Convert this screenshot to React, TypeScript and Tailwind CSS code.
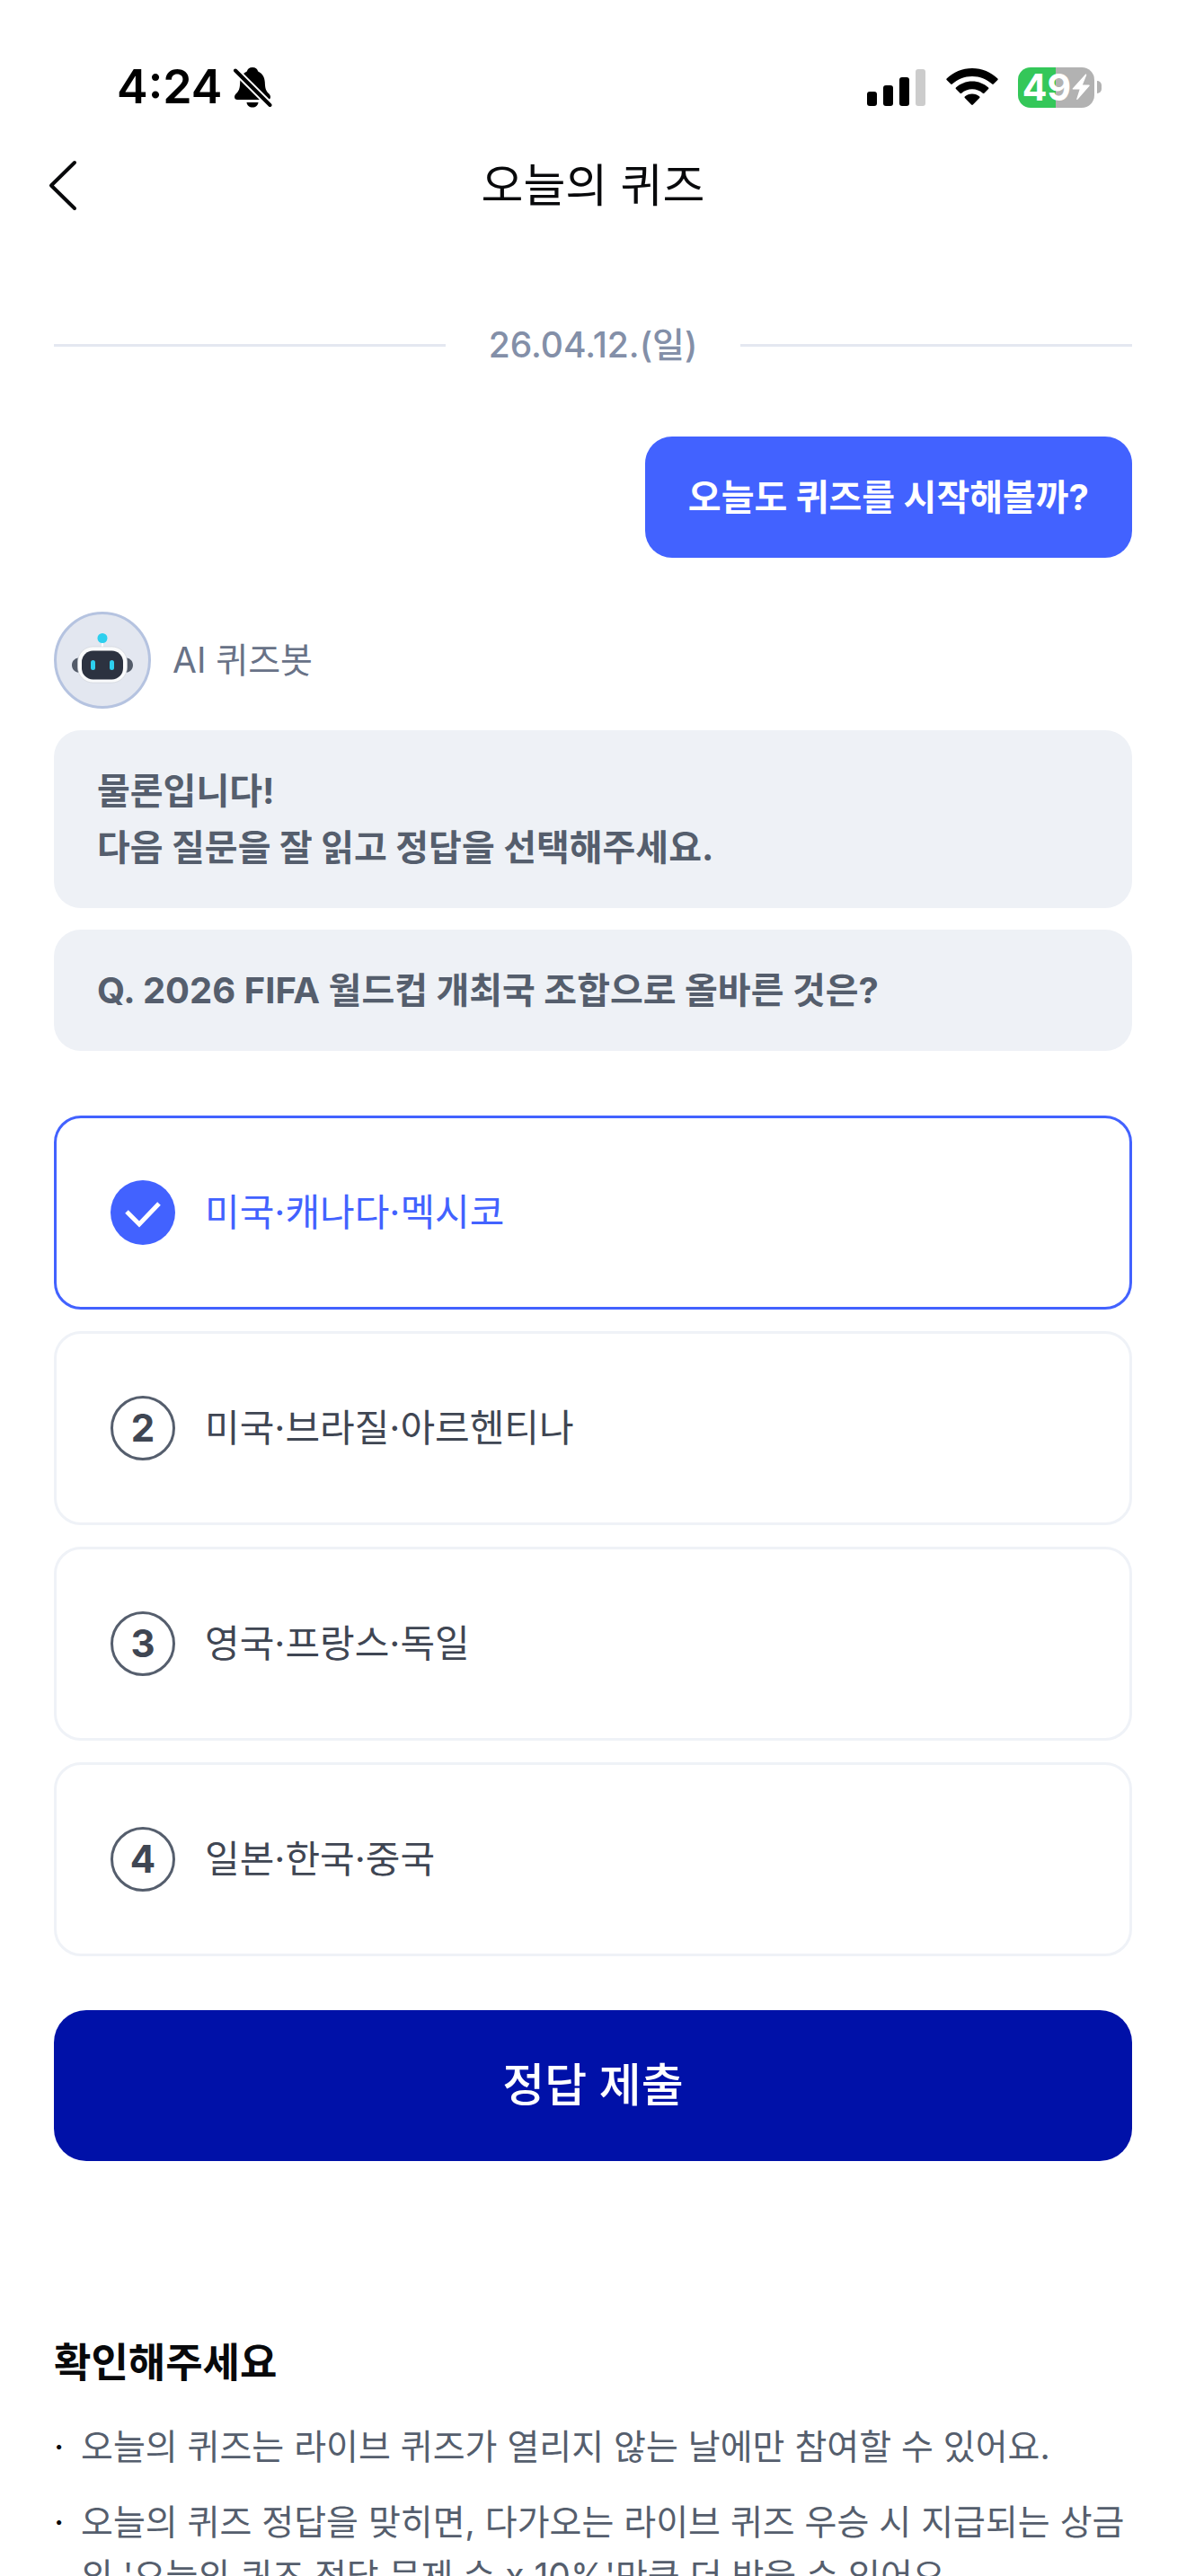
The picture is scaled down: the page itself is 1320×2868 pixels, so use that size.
import { useState } from "react";

const OPTIONS = ["미국·캐나다·멕시코", "미국·브라질·아르헨티나", "영국·프랑스·독일", "일본·한국·중국"];

const NOTES = [
  "오늘의 퀴즈는 라이브 퀴즈가 열리지 않는 날에만 참여할 수 있어요.",
  "오늘의 퀴즈 정답을 맞히면, 다가오는 라이브 퀴즈 우승 시 지급되는 상금의 '오늘의 퀴즈 정답 문제 수 x 10%'만큼 더 받을 수 있어요.",
];

function BellOffIcon() {
  return (
    <svg viewBox="0 0 44 48" className="h-12 w-11" aria-label="무음" role="img">
      <path
        d="M22 2c-3.4 0-5.6 2-6.2 4.600C11 8.800 8.500 13 8.200 18.500c-.3 7-1 9.500-4.200 12.500-1.400 1.400-2 2.400-2 4 0 1.900 1.300 3 3.200 3h33.600c1.900 0 3.200-1.100 3.200-3 0-1.600-.6-2.600-2-4-3.200-3-3.900-5.500-4.200-12.500C35.500 13 33 8.800 28.200 6.600 27.600 4 25.400 2 22 2z"
        fill="#000"
      />
      <path d="M15.500 41h13c-.4 3.400-3 5.600-6.500 5.600s-6.100-2.200-6.500-5.600z" fill="#000" />
      <path d="M1 3.500 43 45.500" stroke="#fff" strokeWidth="8" />
      <path d="M3 5.500 41.500 44" stroke="#000" strokeWidth="4" strokeLinecap="round" />
    </svg>
  );
}

function SignalIcon() {
  return (
    <svg viewBox="0 0 66 42" className="h-[42px] w-[66px]" aria-label="신호" role="img">
      <rect x="0" y="26" width="11" height="16" rx="3" fill="#000" />
      <rect x="18" y="19" width="11" height="23" rx="3" fill="#000" />
      <rect x="36" y="10" width="11" height="32" rx="3" fill="#000" />
      <rect x="54" y="1" width="11" height="41" rx="3" fill="#ccc" />
    </svg>
  );
}

function WifiIcon() {
  return (
    <svg viewBox="0 0 58 42" className="h-[42px] w-[58px]" aria-label="와이파이" role="img">
      <path d="M29 0C18 0 8 4.500.6 11.400c-.5.5-.5 1 0 1.500l4.600 4.700c.5.500 1.100.5 1.600 0C12.700 12.200 20.500 9 29 9s16.300 3.200 22.200 8.600c.5.500 1.100.5 1.600 0l4.600-4.700c.5-.5.5-1 0-1.500C50 4.500 40 0 29 0z" />
      <path d="M29 14.500c-7 0-13.300 2.700-18.100 7-.5.500-.5 1 0 1.500l4.700 4.700c.5.500 1 .5 1.600.1 3.200-2.800 7.300-4.500 11.800-4.500s8.600 1.700 11.800 4.500c.6.400 1.100.4 1.600-.1l4.700-4.700c.5-.5.500-1 0-1.500-4.800-4.300-11.100-7-18.100-7z" />
      <path d="M29 28.500c-3.200 0-6 1.200-8.200 3.100-.5.500-.5 1 0 1.500l7.300 7.500c.6.600 1.200.6 1.800 0l7.300-7.500c.5-.5.5-1 0-1.500-2.200-1.900-5-3.100-8.200-3.100z" />
    </svg>
  );
}

function Battery() {
  return (
    <div className="flex items-center gap-[3px]">
      <div className="flex h-[45px] w-[85px] items-center justify-center gap-px rounded-[14px] bg-[linear-gradient(90deg,#34c759_50%,#b2b2b2_50%)] text-white">
        <span className="text-[41px] leading-none font-bold">49</span>
        <svg viewBox="0 0 20 30" className="h-[30px] w-5 shrink-0" aria-hidden="true">
          <path
            d="M14.800 1 1 16.200c-.6.700-.3 1.300.6 1.300h7L5.300 28c-.3 1 .5 1.400 1.300.6l12.900-14.800c.6-.7.300-1.300-.6-1.300h-7L16.200 1.700c.3-1-.7-1.500-1.400-.7z"
            fill="#fff"
          />
        </svg>
      </div>
      <div className="h-[14px] w-[5px] rounded-r-full bg-[#b2b2b2]" />
    </div>
  );
}

function BotAvatar() {
  return (
    <svg viewBox="0 0 108 108" className="size-[108px]" aria-hidden="true">
      <circle cx="54" cy="54" r="52.500" fill="#e3e7f0" stroke="#b5c3e0" strokeWidth="3" />
      <path d="M54 34v6" stroke="#fff" strokeWidth="2" />
      <circle cx="54" cy="29.500" r="5.500" fill="#2dcfee" />
      <path d="M30 51c-6 0-10 3.500-10 8.500S24 68 30 68zM78 51c6 0 10 3.500 10 8.500S84 68 78 68z" fill="#535b69" />
      <rect x="26.500" y="39" width="55" height="40" rx="17" fill="#fafbfc" stroke="#cdd0d6" strokeWidth=".6" />
      <rect x="31" y="43.500" width="46" height="32" rx="12.500" fill="#2c3240" />
      <rect x="41" y="54" width="5" height="11" rx="2.500" fill="#2dcfee" />
      <rect x="62" y="54" width="5" height="11" rx="2.500" fill="#2dcfee" />
    </svg>
  );
}

export default function App() {
  const [picked, setPicked] = useState(0);

  return (
    <div className="flex h-screen flex-col overflow-hidden bg-white font-['Inter','Noto_Sans_CJK_KR',sans-serif] text-[39px] leading-[60px] text-[#555e6d]">
      <div className="flex items-center justify-between pt-[71px] pr-[94px] pl-[130px] text-black">
        <div className="flex items-center gap-3">
          <span className="text-[52px] leading-[52px] font-semibold">4:24</span>
          <BellOffIcon />
        </div>
        <div className="flex items-center gap-[22px]">
          <SignalIcon />
          <WifiIcon />
          <Battery />
        </div>
      </div>

      <header className="grid grid-cols-[1fr_auto_1fr] items-center px-12 pt-12 text-[#08090b]">
        <button type="button" aria-label="뒤로" className="w-11">
          <svg
            viewBox="0 0 44 72"
            className="h-[72px] w-11"
            fill="none"
            stroke="currentColor"
            strokeWidth="4"
            strokeLinecap="round"
            strokeLinejoin="round"
          >
            <path d="M35 10 9 35.500 35 61" />
          </svg>
        </button>
        <h1 className="text-[51px] leading-[72px] font-normal">오늘의 퀴즈</h1>
      </header>

      <main className="flex-1 overflow-y-auto px-15 pt-[111px] [scrollbar-width:none]">
        <div className="flex items-center gap-12 text-[#838fa8]">
          <div className="h-[3px] flex-1 bg-[#e4e8f1]" />
          <time dateTime="2026-04-12" className="font-medium">
            26.04.12.(일)
          </time>
          <div className="h-[3px] flex-1 bg-[#e4e8f1]" />
        </div>

        <p className="mt-[72px] ml-auto w-fit rounded-[30px] bg-[#4262ff] px-12 py-9 text-[40px] leading-[63px] font-bold text-white">
          오늘도 퀴즈를 시작해볼까?
        </p>

        <section className="mt-15 flex flex-col gap-6">
          <div className="flex items-center gap-6 text-[#687287]">
            <BotAvatar />
            <span>AI 퀴즈봇</span>
          </div>
          <p className="rounded-[30px] bg-[#eef1f6] px-12 py-9 text-[40px] leading-[63px] font-bold">
            물론입니다!
            <br />
            다음 질문을 잘 읽고 정답을 선택해주세요.
          </p>
          <p className="rounded-[30px] bg-[#eef1f6] px-12 py-9 text-[40px] leading-[63px] font-bold">
            Q. 2026 FIFA 월드컵 개최국 조합으로 올바른 것은?
          </p>
        </section>

        <form onSubmit={(e) => e.preventDefault()}>
          <fieldset aria-label="정답 선택" className="mt-[72px] flex flex-col gap-6">
            {OPTIONS.map((label, i) => {
              const on = picked === i;
              return (
                <label
                  key={label}
                  className={`flex h-[216px] cursor-pointer items-center gap-[33px] rounded-[30px] border-[3px] px-15 text-[42px] ${
                    on ? "border-[#4262ff] text-[#4262ff]" : "border-[#eff2f7] text-[#3f4653]"
                  }`}
                >
                  <input type="radio" name="answer" className="sr-only" checked={on} onChange={() => setPicked(i)} />
                  {on ? (
                    <svg viewBox="0 0 72 72" className="size-18" aria-hidden="true">
                      <circle cx="36" cy="36" r="36" fill="#4262ff" />
                      <path d="m18 35 14 14 22-23" fill="none" stroke="#fff" strokeWidth="5" />
                    </svg>
                  ) : (
                    <span className="flex size-18 items-center justify-center rounded-full border-[3px] border-[#555e6d] font-bold">
                      {i + 1}
                    </span>
                  )}
                  <span>{label}</span>
                </label>
              );
            })}
          </fieldset>

          <button
            type="submit"
            className="mt-15 h-[168px] w-full rounded-[36px] bg-[#0011a8] text-[51px] font-medium text-white"
          >
            정답 제출
          </button>
        </form>

        <section className="mt-[192px]">
          <h2 className="text-[45px] leading-[66px] font-bold text-[#08090b]">확인해주세요</h2>
          <ul className="mt-[30px] flex flex-col gap-6">
            {NOTES.map((note) => (
              <li key={note} className="flex">
                <span className="w-[30px] text-[#08090b]">·</span>
                <span className="flex-1">{note}</span>
              </li>
            ))}
          </ul>
        </section>
      </main>
    </div>
  );
}
